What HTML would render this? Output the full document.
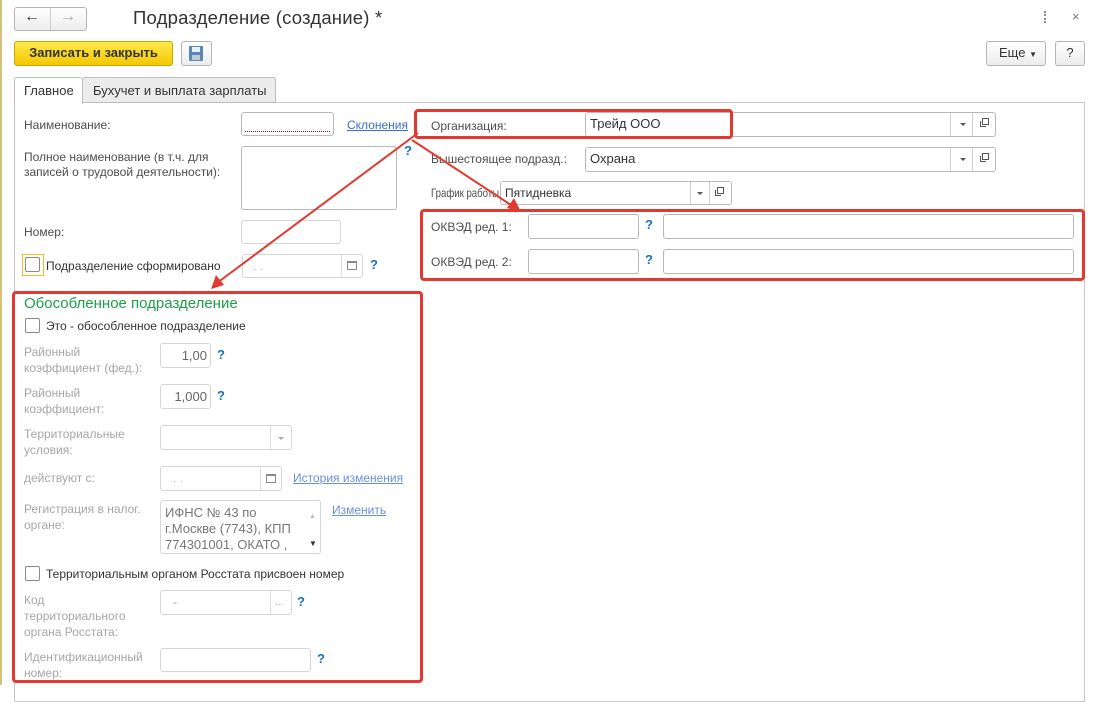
<!DOCTYPE html>
<html><head><meta charset="utf-8"><style>
*{box-sizing:border-box;margin:0;padding:0}
body{width:1098px;height:685px;background:#fff;font-family:"Liberation Sans",Arial,sans-serif;font-size:12px;color:#4d4d4d;position:relative;overflow:hidden}
.a{position:absolute}
.l{position:absolute;line-height:16px;white-space:nowrap}
.g{color:#a6a6a6}
.in{position:absolute;border:1px solid #b9b9b9;border-radius:3px;background:#fff}
.gi{border-color:#d6d6d6}
.sep{position:absolute;top:0;bottom:0;border-left:1px solid #cfcfcf}
.q{position:absolute;color:#1a6fc0;font-weight:bold;font-size:13px}
.lk{position:absolute;color:#3a6cd6;text-decoration:underline;white-space:nowrap}
.cb{position:absolute;width:15px;height:15px;border:1px solid #8a8a8a;border-radius:2px;background:#fff}
.btn{position:absolute;border:1px solid #b5b5b5;border-radius:3px;background:linear-gradient(#fff,#ececec)}
.red{position:absolute;border:3px solid #e03a30;border-radius:4px}
.tri{position:absolute;width:0;height:0;border-left:3px solid transparent;border-right:3px solid transparent;border-top:3px solid #555}
.cp{position:absolute;width:7px;height:7px;border:1px solid #555;background:#fff}
.cp2{position:absolute;width:6px;height:6px;border-left:1px solid #555;border-bottom:1px solid #555}
</style></head><body>
<div class="a" style="left:0;top:0;width:2px;height:685px;background:#d4c27a"></div>
<!-- nav -->
<div class="btn" style="left:14px;top:7px;width:73px;height:24px"></div>
<div class="a" style="left:50px;top:8px;height:22px;border-left:1px solid #ccc"></div>
<div class="a" style="left:24px;top:8px;font-size:16px;color:#333;font-weight:bold">&#x2190;</div>
<div class="a" style="left:60px;top:8px;font-size:16px;color:#aaa;font-weight:bold">&#x2192;</div>
<div class="a" style="left:133px;top:7px;font-size:18.5px;color:#333;letter-spacing:0.2px">Подразделение (создание) *</div>
<div class="a" style="left:1044px;top:11px;width:2px;height:12px;border-left:2px dotted #888"></div>
<div class="a" style="left:1072px;top:9px;color:#777;font-size:13px">×</div>
<!-- toolbar -->
<div class="a" style="left:14px;top:41px;width:159px;height:25px;border:1px solid #c9a800;border-radius:3px;background:linear-gradient(#ffe84a,#f3c800);color:#333;font-weight:bold;font-size:13px;line-height:22px;text-align:center">Записать и закрыть</div>
<div class="btn" style="left:181px;top:41px;width:31px;height:25px"></div>
<div class="a" style="left:189px;top:46px;width:14px;height:15px;background:#5a86b8;border-radius:1px"></div>
<div class="a" style="left:192px;top:47px;width:8px;height:5px;background:#e8eef5"></div>
<div class="a" style="left:192px;top:55px;width:8px;height:5px;background:#c0cbd8"></div>
<div class="btn" style="left:986px;top:41px;width:60px;height:25px;font-size:13px;color:#333;line-height:22px;padding-left:12px">Еще <span style="font-size:8px">▼</span></div>
<div class="btn" style="left:1055px;top:41px;width:30px;height:25px;font-size:13px;color:#333;line-height:22px;text-align:center">?</div>
<!-- tabs -->
<div class="a" style="left:14px;top:102px;width:1071px;height:600px;border:1px solid #c8c8c8"></div>
<div class="a" style="left:82px;top:77px;width:194px;height:26px;border:1px solid #bdbdbd;border-radius:3px 3px 0 0;background:#ececec;font-size:13px;color:#333;padding:5px 0 0 10px">Бухучет и выплата зарплаты</div>
<div class="a" style="left:14px;top:77px;width:69px;height:27px;border:1px solid #bdbdbd;border-bottom:none;border-radius:3px 3px 0 0;background:#fff;font-size:13px;color:#333;padding:5px 0 0 9px">Главное</div>
<!-- left top -->
<div class="l" style="left:24px;top:117px">Наименование:</div>
<div class="in" style="left:241px;top:112px;width:93px;height:24px"><div class="a" style="left:3px;right:3px;bottom:3px;border-bottom:1px dotted #c00"></div></div>
<div class="lk" style="left:347px;top:118px">Склонения</div>
<div class="l" style="left:24px;top:149px">Полное наименование (в т.ч. для</div>
<div class="l" style="left:24px;top:164px">записей о трудовой деятельности):</div>
<div class="in" style="left:241px;top:146px;width:156px;height:64px"></div>
<div class="q" style="left:404px;top:143px">?</div>
<div class="l" style="left:24px;top:224px">Номер:</div>
<div class="in gi" style="left:241px;top:220px;width:100px;height:24px"></div>
<div class="a" style="left:22px;top:254px;width:22px;height:22px;border:1px solid #f0c020"></div>
<div class="cb" style="left:25px;top:257px"></div>
<div class="l" style="left:46px;top:258px;color:#333">Подразделение сформировано</div>
<div class="in gi" style="left:242px;top:254px;width:121px;height:24px"><div class="sep" style="left:98px;border-color:#ddd"></div><div class="a" style="left:10px;top:4px;color:#bbb">. .</div><div class="a" style="left:104px;top:6px;width:10px;height:9px;border:1px solid #888;border-top-width:2px"></div></div>
<div class="q" style="left:370px;top:257px">?</div>
<!-- right -->
<div class="l" style="left:431px;top:118px">Организация:</div>
<div class="in" style="left:585px;top:112px;width:411px;height:25px;color:#333;font-size:13px;padding:3px 4px">Трейд ООО<div class="sep" style="left:364px"></div><div class="sep" style="left:386px"></div><div class="tri" style="left:374px;top:10px"></div><div class="cp2" style="left:394px;top:8px"></div><div class="cp" style="left:396px;top:5px"></div></div>
<div class="l" style="left:431px;top:151px">Вышестоящее подразд.:</div>
<div class="in" style="left:585px;top:147px;width:411px;height:25px;color:#333;font-size:13px;padding:3px 4px">Охрана<div class="sep" style="left:364px"></div><div class="sep" style="left:386px"></div><div class="tri" style="left:374px;top:10px"></div><div class="cp2" style="left:394px;top:8px"></div><div class="cp" style="left:396px;top:5px"></div></div>
<div class="l" style="left:431px;top:185px;transform:scaleX(0.8);transform-origin:0 0">График работы:</div>
<div class="in" style="left:500px;top:181px;width:232px;height:24px;color:#333;font-size:12px;padding:4px 4px">Пятидневка<div class="sep" style="left:189px"></div><div class="sep" style="left:208px"></div><div class="tri" style="left:196px;top:10px"></div><div class="cp2" style="left:214px;top:8px"></div><div class="cp" style="left:216px;top:5px"></div></div>
<div class="l" style="left:431px;top:219px">ОКВЭД ред. 1:</div>
<div class="in" style="left:528px;top:214px;width:111px;height:25px"></div>
<div class="q" style="left:645px;top:217px">?</div>
<div class="in" style="left:663px;top:214px;width:411px;height:25px"></div>
<div class="l" style="left:431px;top:254px">ОКВЭД ред. 2:</div>
<div class="in" style="left:528px;top:249px;width:111px;height:25px"></div>
<div class="q" style="left:645px;top:252px">?</div>
<div class="in" style="left:663px;top:249px;width:411px;height:25px"></div>
<!-- bottom left -->
<div class="a" style="left:24px;top:295px;font-size:15px;color:#1e9f4a">Обособленное подразделение</div>
<div class="cb" style="left:25px;top:318px"></div>
<div class="l" style="left:46px;top:318px;color:#333">Это - обособленное подразделение</div>
<div class="l g" style="left:24px;top:344px">Районный</div>
<div class="l g" style="left:24px;top:360px">коэффициент (фед.):</div>
<div class="in gi" style="left:160px;top:343px;width:51px;height:25px;text-align:right;padding:4px 3px;color:#666;font-size:13px">1,00</div>
<div class="q" style="left:217px;top:347px">?</div>
<div class="l g" style="left:24px;top:385px">Районный</div>
<div class="l g" style="left:24px;top:401px">коэффициент:</div>
<div class="in gi" style="left:160px;top:384px;width:51px;height:25px;text-align:right;padding:4px 3px;color:#666;font-size:13px">1,000</div>
<div class="q" style="left:217px;top:388px">?</div>
<div class="l g" style="left:24px;top:426px">Территориальные</div>
<div class="l g" style="left:24px;top:442px">условия:</div>
<div class="in gi" style="left:160px;top:425px;width:132px;height:25px"><div class="sep" style="left:109px;border-color:#ddd"></div><div class="tri" style="left:117px;top:11px;border-top-color:#aaa"></div></div>
<div class="l g" style="left:24px;top:470px">действуют с:</div>
<div class="in gi" style="left:160px;top:466px;width:122px;height:25px"><div class="a" style="left:12px;top:4px;color:#bbb">. .</div><div class="sep" style="left:99px;border-color:#ddd"></div><div class="a" style="left:105px;top:7px;width:10px;height:9px;border:1px solid #888;border-top-width:2px"></div></div>
<div class="lk" style="left:293px;top:471px;color:#6a8fe0">История изменения</div>
<div class="l g" style="left:24px;top:501px">Регистрация в налог.</div>
<div class="l g" style="left:24px;top:517px">органе:</div>
<div class="in gi" style="left:160px;top:500px;width:161px;height:54px;color:#777;font-size:13px;line-height:16px;padding:4px 4px">ИФНС № 43 по<br>г.Москве (7743), КПП<br>774301001, ОКАТО ,<div class="a" style="left:148px;top:8px;font-size:7px;color:#bbb">▲</div><div class="a" style="left:148px;top:35px;font-size:8px;color:#333">▼</div></div>
<div class="lk" style="left:332px;top:503px;color:#6a8fe0">Изменить</div>
<div class="cb" style="left:25px;top:566px"></div>
<div class="l" style="left:46px;top:566px;color:#333">Территориальным органом Росстата присвоен номер</div>
<div class="l g" style="left:24px;top:592px">Код</div>
<div class="l g" style="left:24px;top:608px">территориального</div>
<div class="l g" style="left:24px;top:624px">органа Росстата:</div>
<div class="in gi" style="left:160px;top:590px;width:132px;height:25px"><div class="a" style="left:12px;top:4px;color:#999">-</div><div class="sep" style="left:109px;border-color:#ddd"></div><div class="a" style="left:114px;top:6px;color:#aaa;font-size:10px">...</div></div>
<div class="q" style="left:297px;top:594px">?</div>
<div class="l g" style="left:24px;top:649px">Идентификационный</div>
<div class="l g" style="left:24px;top:665px">номер:</div>
<div class="in gi" style="left:160px;top:648px;width:151px;height:24px"></div>
<div class="q" style="left:317px;top:651px">?</div>
<!-- red boxes -->
<div class="red" style="left:414px;top:109px;width:319px;height:30px"></div>
<div class="red" style="left:420px;top:209px;width:665px;height:72px"></div>
<div class="red" style="left:12px;top:291px;width:411px;height:392px"></div>
<svg class="a" style="left:0;top:0" width="1098" height="685">
<g stroke="#e03a30" stroke-width="2" fill="#e03a30">
<line x1="418" y1="133" x2="217" y2="283"/>
<polygon points="211,289 216,275 224,285" stroke="none"/>
<line x1="412" y1="140" x2="514" y2="207"/>
<polygon points="521,212 507,208 514,198" stroke="none"/>
</g></svg>
</body></html>
